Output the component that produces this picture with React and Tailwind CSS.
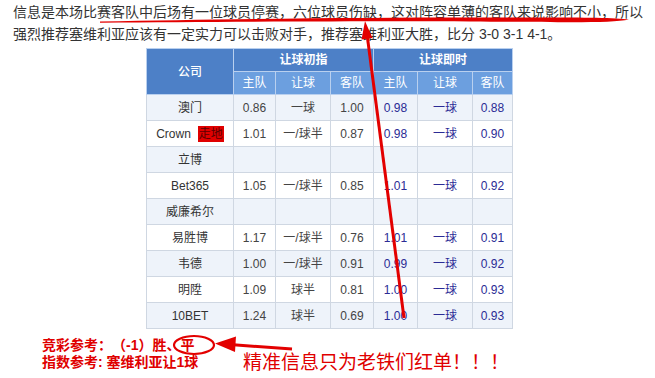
import React from "react";

const rows = [
  ["澳门", "0.86", "一球", "1.00", "0.98", "一球", "0.88"],
  ["Crown", "1.01", "一/球半", "0.87", "0.98", "一球", "0.90"],
  ["立博", "", "", "", "", "", ""],
  ["Bet365", "1.05", "一/球半", "0.85", "1.01", "一球", "0.92"],
  ["威廉希尔", "", "", "", "", "", ""],
  ["易胜博", "1.17", "一/球半", "0.76", "1.01", "一球", "0.91"],
  ["韦德", "1.00", "一/球半", "0.91", "0.99", "一球", "0.92"],
  ["明陞", "1.09", "球半", "0.81", "1.00", "一球", "0.93"],
  ["10BET", "1.24", "球半", "0.69", "1.00", "一球", "0.93"],
];

const font = { fontFamily: '"Liberation Sans", "Noto Sans CJK SC", sans-serif' };

function Marks() {
  return (
    <svg
      className="absolute inset-0 pointer-events-none"
      width="655"
      height="378"
      viewBox="0 0 655 378"
    >
      {/* brush underline */}
      <path
        d="M100 21.5 C 220 19, 360 17.5, 470 17.5 C 560 17.5, 610 17, 629 19.5 C 610 23.5, 560 22, 470 21.5 C 360 21, 220 22, 100 22.8 Z"
        fill="#e30000"
      />
      {/* long arrow */}
      <line x1="404" y1="318" x2="367" y2="34" stroke="#e30000" strokeWidth="3" />
      <polygon points="365,21 372.5,38 361.5,39.5" fill="#e30000" />
      {/* circle */}
      <ellipse cx="194" cy="345" rx="20" ry="9" fill="none" stroke="#e30000" strokeWidth="2.2" />
      {/* short arrow */}
      <line x1="230" y1="344.5" x2="292" y2="349" stroke="#e30000" strokeWidth="3" />
      <polygon points="215,343.5 236,336.5 235,352" fill="#e30000" />
    </svg>
  );
}

export default function App() {
  return (
    <div
      className="relative w-[655px] h-[378px] bg-white overflow-hidden [text-spacing-trim:space-all]"
      style={font}
    >
      <div className="pl-[13px] pt-[1px] text-[14px] leading-[22px] text-[#333] whitespace-nowrap">
        <div>信息是本场比赛客队中后场有一位球员停赛，六位球员伤缺，这对阵容单薄的客队来说影响不小，所以</div>
        <div>强烈推荐塞维利亚应该有一定实力可以击败对手，推荐塞维利亚大胜，比分 3-0 3-1 4-1。</div>
      </div>

      <table className="ml-[146px] mt-[3px] w-[366px] table-fixed border-collapse text-[12px] text-center">
        <colgroup>
          <col className="w-[87px]" />
          <col className="w-[42px]" />
          <col className="w-[55px]" />
          <col className="w-[43px]" />
          <col className="w-[44px]" />
          <col className="w-[55px]" />
          <col className="w-[40px]" />
        </colgroup>
        <thead className="text-white">
          <tr className="h-[23px]">
            <th rowSpan={2} className="bg-[#4d80c7] border border-[#b9d0ef] font-medium text-[12px]">
              公司
            </th>
            <th colSpan={3} className="bg-[#4d80c7] border border-[#b9d0ef] font-bold">
              让球初指
            </th>
            <th colSpan={3} className="bg-[#4d80c7] border border-[#b9d0ef] font-bold">
              让球即时
            </th>
          </tr>
          <tr className="h-[23px]">
            {["主队", "让球", "客队", "主队", "让球", "客队"].map((t, i) => (
              <th key={i} className="bg-[#6c9fdf] border border-[#b9d0ef] font-normal">
                {t}
              </th>
            ))}
          </tr>
        </thead>
        <tbody>
          {rows.map((r, i) => (
            <tr key={i} className={i % 2 === 0 ? "h-[26px] bg-[#eef3fa]" : "h-[26px] bg-white"}>
              {r.map((c, j) => (
                <td
                  key={j}
                  className={
                    "border border-[#cfd7e2] p-0 " +
                    (j === 0 ? "text-[#333]" : j < 4 ? "text-[#444]" : "text-[#2b2b95]")
                  }
                >
                  {c}
                  {j === 0 && c === "Crown" && (
                    <span className="ml-[7px] px-[1px] bg-[#e00000] text-[#5c0000] leading-[16px] inline-block">
                      走地
                    </span>
                  )}
                </td>
              ))}
            </tr>
          ))}
        </tbody>
      </table>

      <div className="flex items-start">
        <div className="w-[243px] pl-[42px] pt-[8px] text-[14px] leading-[17px] font-bold text-[#e00000] whitespace-nowrap">
          <div>竞彩参考：（-1）胜、平</div>
          <div>指数参考: 塞维利亚让1球</div>
        </div>
        <div className="mt-[23px] text-[19px] leading-[22px] text-[#e00000] whitespace-nowrap">
          精准信息只为老铁们红单！！！
        </div>
      </div>

      <Marks />
    </div>
  );
}
